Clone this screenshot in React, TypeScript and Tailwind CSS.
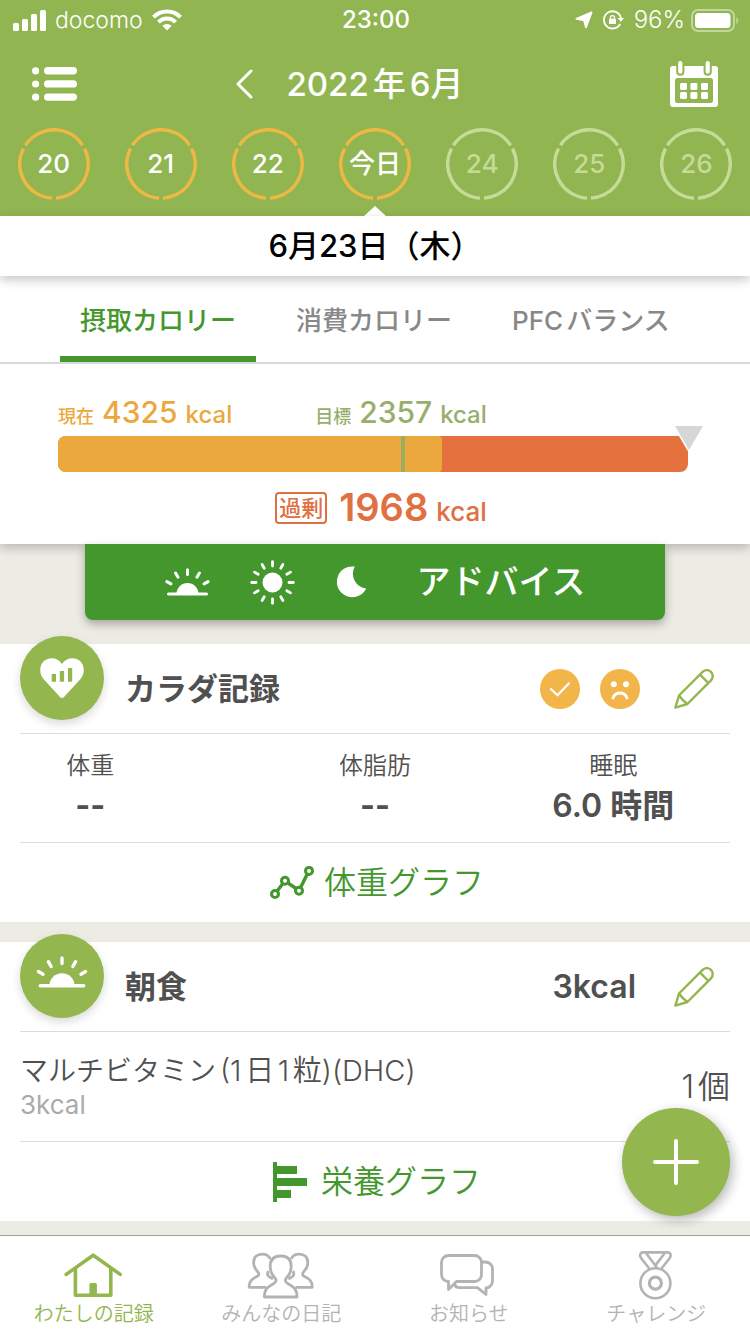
import { useState } from 'react'
import type { ReactNode } from 'react'

type Day = { label: string; state: 'done' | 'future' }

const days: Day[] = [
  { label: '20', state: 'done' },
  { label: '21', state: 'done' },
  { label: '22', state: 'done' },
  { label: '今日', state: 'done' },
  { label: '24', state: 'future' },
  { label: '25', state: 'future' },
  { label: '26', state: 'future' },
]

const tabs = ['摂取カロリー', '消費カロリー', 'PFCバランス']

const intake = { current: 4325, target: 2357, excess: 1968 }

function SignalIcon() {
  return (
    <svg width="33" height="21" viewBox="0 0 33 21" fill="white" aria-hidden="true">
      <rect x="0" y="13" width="6" height="8" rx="1.5" />
      <rect x="9" y="9" width="6" height="12" rx="1.5" />
      <rect x="18" y="4" width="6" height="17" rx="1.5" />
      <rect x="27" y="0" width="6" height="21" rx="1.5" />
    </svg>
  )
}

function WifiIcon() {
  return (
    <svg width="30" height="22" viewBox="0 0 30 22" aria-hidden="true">
      <g fill="none" stroke="white" strokeWidth="4">
        <path d="M1.4 8.2 A19 19 0 0 1 28.6 8.2" />
        <path d="M6.4 13.2 A12 12 0 0 1 23.6 13.2" />
      </g>
      <path d="M15 21.5 L10.3 16.8 A6.8 6.8 0 0 1 19.7 16.8 Z" fill="white" />
    </svg>
  )
}

function LocationIcon() {
  return (
    <svg width="18" height="18" viewBox="0 0 18 18" aria-hidden="true">
      <path d="M16.6 1.4 L11 16.4 L9 9.4 L1.4 7.8 Z" fill="white" stroke="white" strokeWidth="1.8" strokeLinejoin="round" />
    </svg>
  )
}

function RotationLockIcon() {
  return (
    <svg width="21" height="20" viewBox="0 0 21 20" aria-hidden="true">
      <path d="M17.2 13.8 A8.6 8.6 0 1 1 18 8.4" fill="none" stroke="white" strokeWidth="1.8" />
      <path d="M14.6 8 H21 L17.8 12 Z" fill="white" />
      <rect x="6" y="8.8" width="7" height="5.2" rx="0.8" fill="white" />
      <path d="M7.5 9 V7.6 a2 2 0 0 1 4 0 V9" fill="none" stroke="white" strokeWidth="1.3" />
    </svg>
  )
}

function BatteryIcon() {
  return (
    <svg width="48" height="23" viewBox="0 0 48 23" aria-hidden="true">
      <rect x="1" y="1" width="42" height="21" rx="6" fill="none" stroke="white" strokeOpacity="0.45" strokeWidth="2" />
      <rect x="4" y="4" width="35.5" height="15" rx="3.5" fill="white" />
      <path d="M45.3 8 V15 Q47.3 14 47.3 11.5 Q47.3 9 45.3 8" fill="white" fillOpacity="0.45" />
    </svg>
  )
}

function ListIcon() {
  return (
    <svg width="45" height="34" viewBox="0 0 45 34" fill="white" aria-hidden="true">
      {[0, 13.2, 26.4].map((y) => (
        <g key={y}>
          <circle cx="3.6" cy={y + 3.8} r="3.6" />
          <rect x="12" y={y} width="33" height="7.4" rx="3.7" />
        </g>
      ))}
    </svg>
  )
}

function CalendarIcon() {
  return (
    <svg width="48" height="46" viewBox="0 0 48 46" aria-hidden="true">
      <rect x="0" y="5" width="48" height="41" rx="3" fill="white" />
      <rect x="5" y="17" width="38" height="25" rx="2.5" fill="#91b551" />
      {[22, 31].map((y) =>
        [10, 20.4, 31].map((x) => (
          <rect key={`${x}-${y}`} x={x} y={y} width="7" height="7" rx="1.4" fill="white" />
        ))
      )}
      {[8.2, 35.6].map((x) => (
        <g key={x}>
          <rect x={x - 2} y="0" width="8.2" height="14.8" rx="4" fill="#91b551" />
          <rect x={x} y="0" width="4.2" height="12.8" rx="2.1" fill="white" />
        </g>
      ))}
    </svg>
  )
}

function DayRing({ color }: { color: string }) {
  return (
    <svg width="72" height="72" viewBox="0 0 72 72" className="absolute inset-0" aria-hidden="true">
      <circle
        cx="36"
        cy="36"
        r="34.2"
        fill="none"
        stroke={color}
        strokeWidth="3.4"
        pathLength={360}
        strokeDasharray="113.5 6.5"
        transform="rotate(-26.7 36 36)"
      />
    </svg>
  )
}

function SunriseIcon({ className }: { className: string }) {
  return (
    <svg viewBox="0 0 45 28" className={className} stroke="white" strokeWidth="3" strokeLinecap="round" aria-hidden="true">
      <path d="M3.5 26 H41.5" />
      <path d="M11.5 26 A11 11 0 0 1 33.5 26 Z" fill="white" stroke="none" />
      <path d="M22.5 1.7 V6.6 M10.6 5 L13 9.2 M34.4 5 L32 9.2 M1.9 13.6 L5.9 15.9 M43.1 13.6 L39.1 15.9" />
    </svg>
  )
}

function SunIcon() {
  return (
    <svg width="45" height="45" viewBox="0 0 45 45" aria-hidden="true">
      <circle cx="22.5" cy="22.5" r="10" fill="white" />
      {Array.from({ length: 12 }, (_, i) => (
        <path
          key={i}
          d="M22.5 1.7 V6"
          stroke="white"
          strokeWidth="2.8"
          strokeLinecap="round"
          transform={`rotate(${i * 30} 22.5 22.5)`}
        />
      ))}
    </svg>
  )
}

function MoonIcon() {
  return (
    <svg width="30" height="32" viewBox="0 0 30 32" aria-hidden="true">
      <path d="M17.8 0.6 A15.4 15.4 0 1 0 29.2 22.4 A14.6 14.6 0 0 1 17.8 0.6 Z" fill="white" />
    </svg>
  )
}

function HeartIcon() {
  return (
    <svg width="44" height="40" viewBox="0 0 44 40" aria-hidden="true">
      <path
        d="M20 39 L3.5 21 C-1 15.5 -1 7 4.5 2.6 C10 -1.5 18 -0.5 22 6 C26 -0.5 34 -1.5 39.5 2.6 C45 7 45 15.5 40.5 21 L24 39 Q22 41 20 39 Z"
        fill="white"
      />
      <path d="M11.7 16 h4.3 v7.7 h-4.3 z M19.8 13 h4.3 v10.7 h-4.3 z M28 10 h4.2 v13.7 h-4.2 z" fill="#93b64e" />
    </svg>
  )
}

function PencilIcon() {
  return (
    <svg width="40" height="40" viewBox="0 0 40 40" fill="none" stroke="#93b64e" strokeWidth="2.4" strokeLinejoin="round" aria-hidden="true">
      <path d="M1.4 38.6 L5 26.5 L28.6 2.9 A5.9 5.9 0 0 1 37 11.3 L13.4 35 Z" />
      <path d="M5 26.5 C7 29.5 10 32.5 13.4 35 M26 5.6 L34.4 14" />
    </svg>
  )
}

function LineGraphIcon() {
  return (
    <svg width="44" height="33" viewBox="0 0 44 33" fill="none" stroke="#43972c" strokeWidth="3" aria-hidden="true">
      <path d="M7 25.3 L13 17.3 M18 17 L26 22.5 M30.6 21.5 L37.3 8" strokeWidth="3.4" />
      <circle cx="5" cy="28" r="3.5" />
      <circle cx="15" cy="14.7" r="3.5" />
      <circle cx="29" cy="24.7" r="3.5" />
      <circle cx="39" cy="4.9" r="3.5" />
    </svg>
  )
}

function BarGraphIcon() {
  return (
    <svg width="38" height="40" viewBox="0 0 38 40" fill="#43972c" aria-hidden="true">
      <path d="M0 0 h4 v40 h-4 z M4 4 h20 v8 h-20 z M4 16 h30 v8 h-30 z M4 28 h14 v8 h-14 z" />
    </svg>
  )
}

function CheckFace() {
  return (
    <svg width="40" height="40" viewBox="0 0 40 40" aria-hidden="true">
      <circle cx="20" cy="20" r="20" fill="#f1b54a" />
      <path d="M11 20 L17.5 26.2 L29 14.3" fill="none" stroke="white" strokeWidth="2.2" strokeLinecap="round" />
    </svg>
  )
}

function SadFace() {
  return (
    <svg width="40" height="40" viewBox="0 0 40 40" aria-hidden="true">
      <circle cx="20" cy="20" r="20" fill="#f1b54a" />
      <circle cx="13.8" cy="15.2" r="3" fill="white" />
      <circle cx="26" cy="15.2" r="3" fill="white" />
      <path d="M13 29 C15.5 22.3 24.5 22.3 27 29" fill="none" stroke="white" strokeWidth="2.8" strokeLinecap="round" />
    </svg>
  )
}

function HomeIcon() {
  return (
    <svg width="60" height="46" viewBox="0 0 60 46" fill="none" stroke="#93b64e" strokeWidth="3.6" aria-hidden="true">
      <path d="M2.2 22.4 L29.2 3.2 L56.2 22.4" strokeLinecap="round" strokeLinejoin="round" />
      <path d="M11.4 16.5 V43.2 H46.8 V16.5" strokeLinejoin="round" />
      <path d="M25.4 44 V32.5 Q25.4 31 26.9 31 H31.4 Q32.9 31 32.9 32.5 V44 Z" fill="#93b64e" stroke="none" />
    </svg>
  )
}

function PeopleIcon() {
  const side = 'M19 36.3 H2.2 C2 29.5 6 27.5 10 25.4 C12.6 24 12.2 22.4 10.6 20.6 C8 17.8 6.6 15 6.6 11.6 C6.6 6.2 10 3.2 15.2 3.2 C19.4 3.2 22 5 23.2 8 M21.4 20 C20 22.4 20 24 22 25.6 L26 28'
  return (
    <svg width="68" height="48" viewBox="0 0 68 48" fill="none" stroke="#b3b3b3" strokeWidth="2.8" strokeLinejoin="round" aria-hidden="true">
      <path d={side} />
      <path d={side} transform="translate(67.4 0) scale(-1 1)" />
      <path d="M17.4 46 C17.4 38 21 35.6 26 33 C30 30.8 29.6 28.4 27.4 26.2 C24.4 23 23.2 19.4 23.2 15.2 C23.2 8.6 27 5 33.7 5 C40.4 5 44.2 8.6 44.2 15.2 C44.2 19.4 43 23 40 26.2 C37.8 28.4 37.4 30.8 41.4 33 C46.4 35.6 50 38 50 46 Z" />
    </svg>
  )
}

function ChatIcon() {
  return (
    <svg width="60" height="44" viewBox="0 0 60 44" fill="none" stroke="#b3b3b3" strokeWidth="2.8" strokeLinejoin="round" aria-hidden="true">
      <path d="M9.5 2.5 H35.5 A7 7 0 0 1 42.5 9.5 V21.5 A7 7 0 0 1 35.5 28.5 H17.5 L9.5 36.5 V28.5 A7 7 0 0 1 2.5 21.5 V9.5 A7 7 0 0 1 9.5 2.5 Z" />
      <path d="M42.5 9 H46.5 A7 7 0 0 1 53.5 16 V28 A7 7 0 0 1 47 35 V41.5 L38.5 34.6 H20 Q17 34.6 15.4 31.5" />
    </svg>
  )
}

function MedalIcon() {
  return (
    <svg width="36" height="50" viewBox="0 0 36 50" fill="none" stroke="#b3b3b3" strokeWidth="2.6" strokeLinejoin="round" aria-hidden="true">
      <circle cx="17.4" cy="33.2" r="15" />
      <circle cx="17.4" cy="33.2" r="6" strokeWidth="3.2" />
      <path d="M11.6 19 L3 8 C1 5 2.4 2.4 5.4 2.4 H29.4 C32.4 2.4 33.8 5 31.8 8 L23.2 19" />
      <path d="M8 3 L19.2 18 M26.8 3 L17.4 15.4" />
    </svg>
  )
}

function Round({ children }: { children: ReactNode }) {
  return (
    <div className="absolute -top-2 left-5 flex size-[84px] items-center justify-center rounded-full bg-[#93b64e] shadow-[0_4px_10px_rgba(0,0,0,0.15)]">
      {children}
    </div>
  )
}

function GraphLink({ icon, label }: { icon: ReactNode; label: string }) {
  return (
    <a href="#graph" className="flex h-[79px] items-center justify-center gap-[10px] pl-1 text-[32px] leading-10 font-[350] text-[#43972c]">
      {icon}
      {label}
    </a>
  )
}

const navItems = [
  { label: 'わたしの記録', icon: <HomeIcon />, active: true },
  { label: 'みんなの日記', icon: <PeopleIcon />, active: false },
  { label: 'お知らせ', icon: <ChatIcon />, active: false },
  { label: 'チャレンジ', icon: <MedalIcon />, active: false },
]

export default function App() {
  const [tab, setTab] = useState(tabs[0])

  return (
    <div
      lang="ja"
      className="min-h-screen bg-[#ecebe4] pb-[113px] font-[family-name:Inter,'Noto_Sans_CJK_JP',sans-serif] text-[#505050]"
    >
      <header className="bg-[#91b551] text-white">
        <div className="grid h-10 grid-cols-3 items-center pr-[11px] pl-[13px] text-[24px] leading-none">
          <div className="flex items-center gap-[9px]">
            <SignalIcon />
            <span className="text-[23px] font-light">docomo</span>
            <WifiIcon />
          </div>
          <span className="text-center font-medium">23:00</span>
          <div className="flex items-center justify-end gap-[10px]">
            <LocationIcon />
            <RotationLockIcon />
            <div className="flex items-center gap-[6px]">
              <span className="font-light">96%</span>
              <BatteryIcon />
            </div>
          </div>
        </div>

        <div className="grid h-[88px] grid-cols-[1fr_auto_1fr] items-center px-8">
          <div className="flex items-center justify-between pr-8">
            <button type="button" aria-label="メニュー">
              <ListIcon />
            </button>
            <button type="button" aria-label="前の月">
              <svg width="18" height="30" viewBox="0 0 18 30" aria-hidden="true">
                <path d="M15 2 L2 15 L15 28" fill="none" stroke="white" strokeWidth="3" strokeLinecap="round" strokeLinejoin="round" />
              </svg>
            </button>
          </div>
          <h1 className="flex items-center gap-1 text-[33px] leading-10 font-medium">
            <span>2022</span>
            <span>年</span>
            <span>6月</span>
          </h1>
          <button type="button" aria-label="カレンダー" className="justify-self-end">
            <CalendarIcon />
          </button>
        </div>

        <div className="grid h-[88px] grid-cols-7">
          {days.map((d) => (
            <div key={d.label} className="relative flex justify-center">
              <button
                type="button"
                className={`relative size-[72px] text-[26px] leading-none font-medium ${
                  d.state === 'future' ? 'text-[#c6db98]' : 'text-white'
                }`}
              >
                <DayRing color={d.state === 'future' ? '#c6db98' : '#efb845'} />
                {d.label}
              </button>
              {d.label === '今日' && (
                <span className="absolute bottom-0 left-1/2 -translate-x-1/2 border-x-[11px] border-b-[10px] border-x-transparent border-b-white" />
              )}
            </div>
          ))}
        </div>
      </header>

      <div className="relative z-10 flex h-[60px] items-center justify-center bg-white text-[31px] leading-10 font-medium text-black shadow-[0_4px_10px_rgba(0,0,0,0.22)]">
        6月23日（木）
      </div>

      <section className="relative bg-white shadow-[0_4px_10px_rgba(0,0,0,0.22)]">
        <div role="tablist" className="flex h-[88px] items-stretch gap-5 border-b-2 border-[#d9d9d9] px-[60px]">
          {tabs.map((t) => (
            <button
              key={t}
              type="button"
              role="tab"
              aria-selected={t === tab}
              onClick={() => setTab(t)}
              className={`border-b-6 px-5 pt-[10px] text-[26px] leading-10 font-medium [text-autospace:normal] ${
                t === tab ? 'border-[#43972c] text-[#43972c]' : 'border-transparent text-[#888888]'
              }`}
            >
              {t}
            </button>
          ))}
        </div>

        <div className="h-[180px] pt-8 pr-[62px] pl-[58px]">
          <div className="flex h-10 items-baseline gap-[83px] font-medium">
            <p className="flex items-baseline gap-2 text-[#eba83c]">
              <span className="text-[18px]">現在</span>
              <span className="text-[30px] leading-8">{intake.current}</span>
              <span className="text-[24px]">kcal</span>
            </p>
            <p className="flex items-baseline gap-2 text-[#97ae6c]">
              <span className="text-[18px]">目標</span>
              <span className="text-[30px] leading-8">{intake.target}</span>
              <span className="text-[24px]">kcal</span>
            </p>
          </div>

          <div className="relative h-9 rounded-lg bg-[#e5713f]">
            <div className="h-9 w-[61%] rounded-l-lg rounded-r-sm bg-[#eba83c]" />
            <div
              className="absolute inset-y-0 w-1 bg-[#9cad62]"
              style={{ left: `${(intake.target / intake.current) * 100}%` }}
            />
            <svg width="34" height="28" viewBox="0 0 34 28" className="absolute -top-[10px] -right-[18px]" aria-hidden="true">
              <path d="M1 0 H33 L17 27 Z" fill="white" />
              <path d="M3 0 H31 L17 24 Z" fill="#d6d6d6" />
            </svg>
          </div>

          <div className="mt-[15px] flex items-center justify-center gap-3 pl-4 font-medium text-[#e07042]">
            <span className="rounded-sm border-2 border-[#e07042] px-[2px] text-[22px] leading-7">過剰</span>
            <p className="flex items-baseline gap-2">
              <span className="text-[38px] leading-10 font-semibold">{intake.excess}</span>
              <span className="text-[26px] leading-8">kcal</span>
            </p>
          </div>
        </div>
      </section>

      <div className="px-[85px]">
        <button
          type="button"
          className="relative flex h-[76px] w-full items-center justify-center rounded-b-lg bg-[#43972c] text-white shadow-[0_4px_10px_rgba(0,0,0,0.3)]"
        >
          <SunriseIcon className="h-7 w-[45px]" />
          <span className="ml-10">
            <SunIcon />
          </span>
          <span className="ml-[42px]">
            <MoonIcon />
          </span>
          <span className="ml-[50px] text-[34px] leading-10 font-medium">アドバイス</span>
        </button>
      </div>

      <main className="mt-6 flex flex-col gap-5">
        <section className="relative bg-white">
          <Round>
            <HeartIcon />
          </Round>
          <div className="mx-5">
            <div className="flex h-[90px] items-center gap-5 border-b border-[#dcdcdc] pr-4 pl-[105px]">
              <h2 className="flex-1 text-[31px] leading-10 font-bold">カラダ記録</h2>
              <CheckFace />
              <SadFace />
              <button type="button" aria-label="カラダ記録を編集" className="ml-[14px]">
                <PencilIcon />
              </button>
            </div>
            <dl className="grid h-[109px] grid-cols-3 border-b border-[#dcdcdc] pt-3 text-center">
              <div className="pr-24">
                <dt className="text-[24px] leading-10 font-[350]">体重</dt>
                <dd className="text-[32px] leading-10 font-bold">--</dd>
              </div>
              <div>
                <dt className="text-[24px] leading-10 font-[350]">体脂肪</dt>
                <dd className="text-[32px] leading-10 font-bold">--</dd>
              </div>
              <div className="pl-[3px]">
                <dt className="text-[24px] leading-10 font-[350]">睡眠</dt>
                <dd className="text-[32px] leading-10 font-semibold">6.0 時間</dd>
              </div>
            </dl>
            <GraphLink icon={<LineGraphIcon />} label="体重グラフ" />
          </div>
        </section>

        <section className="relative bg-white">
          <Round>
            <SunriseIcon className="mb-2 h-8 w-[52px]" />
          </Round>
          <div className="mx-5">
            <div className="flex h-[90px] items-center border-b border-[#dcdcdc] pr-4 pl-[105px]">
              <h2 className="flex-1 text-[31px] leading-10 font-bold">朝食</h2>
              <span className="text-[32px] leading-10 font-semibold">3kcal</span>
              <button type="button" aria-label="朝食を編集" className="ml-[38px]">
                <PencilIcon />
              </button>
            </div>
            <div className="flex h-[110px] items-center justify-between border-b border-[#dcdcdc]">
              <div>
                <p className="flex items-baseline gap-1 text-[28px] leading-9 font-[350] [text-autospace:normal]">
                  マルチビタミン
                  <span className="text-[29px]">(1日1粒)(DHC)</span>
                </p>
                <p className="text-[26px] leading-8 text-[#aaaaaa]">3kcal</p>
              </div>
              <p className="text-[32px] leading-10 font-[350] [text-autospace:normal]">1個</p>
            </div>
            <GraphLink icon={<BarGraphIcon />} label="栄養グラフ" />
          </div>
        </section>
      </main>

      <button
        type="button"
        aria-label="追加"
        className="fixed right-5 bottom-[118px] z-20 flex size-[108px] items-center justify-center rounded-full bg-[#93b64e] shadow-[3px_4px_12px_rgba(0,0,0,0.28)]"
      >
        <svg width="46" height="46" viewBox="0 0 46 46" aria-hidden="true">
          <path d="M23 2 V44 M2 23 H44" stroke="white" strokeWidth="4" strokeLinecap="round" />
        </svg>
      </button>

      <nav className="fixed inset-x-0 bottom-0 z-10 grid h-[99px] grid-cols-4 border-t border-[#a3a396] bg-white">
        {navItems.map((item) => (
          <a
            key={item.label}
            href="#nav"
            className={`flex flex-col items-center pt-[14px] text-[20px] leading-7 font-[350] ${
              item.active ? 'text-[#93b64e]' : 'text-[#b3b3b3]'
            }`}
          >
            <span className="flex h-[50px] items-center">{item.icon}</span>
            {item.label}
          </a>
        ))}
      </nav>
    </div>
  )
}
